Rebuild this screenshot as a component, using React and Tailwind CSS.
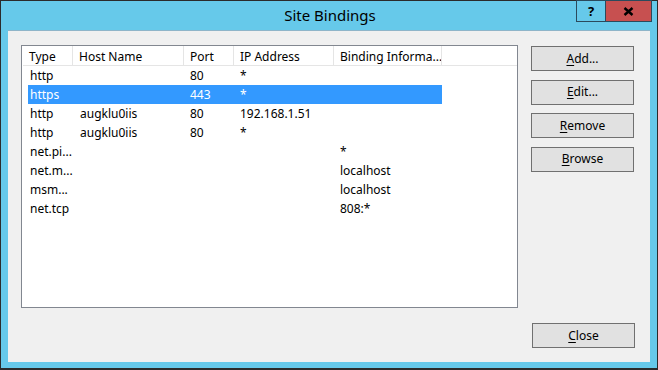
import React from "react";

const font = { fontFamily: '"Segoe UI", "Noto Sans", "Liberation Sans", sans-serif' };

const rows = [
  { type: "http", host: "", port: "80", ip: "*", info: "" },
  { type: "https", host: "", port: "443", ip: "*", info: "", sel: true },
  { type: "http", host: "augklu0iis", port: "80", ip: "192.168.1.51", info: "" },
  { type: "http", host: "augklu0iis", port: "80", ip: "*", info: "" },
  { type: "net.pi...", host: "", port: "", ip: "", info: "*" },
  { type: "net.m...", host: "", port: "", ip: "", info: "localhost" },
  { type: "msm...", host: "", port: "", ip: "", info: "localhost" },
  { type: "net.tcp", host: "", port: "", ip: "", info: "808:*" },
];

function Btn({ u, rest, className = "" }) {
  return (
    <button
      className={
        "w-[103px] h-[25px] bg-[#e1e1e1] border border-[#707070] text-[12px] text-black flex items-center justify-center leading-none " +
        className
      }
    >
      <span className="underline underline-offset-2">{u}</span>
      <span>{rest}</span>
    </button>
  );
}

export default function App() {
  return (
    <div
      className="w-[658px] h-[370px] bg-[#66c9ea] border-t border-l border-r border-b-2 border-[#2b2b2b] flex flex-col"
      style={font}
    >
      <div className="relative h-[29px] flex items-center justify-center shrink-0">
        <span className="text-[15px] text-black leading-none -mt-[1px] pl-[2px]">Site Bindings</span>
        <div className="absolute right-[5px] top-[-1px] flex">
          <div className="w-[30px] h-[22px] border border-[#2b4a5c] flex items-center justify-center text-[13px] font-bold text-black leading-none">
            ?
          </div>
          <div className="w-[46px] h-[22px] bg-[#c75050] border border-l-0 border-[#2b4a5c] flex items-center justify-center">
            <svg width="11" height="9" viewBox="0 0 11 9">
              <path d="M1.5 1 L9.5 8 M9.5 1 L1.5 8" stroke="#000" strokeWidth="2.4" />
            </svg>
          </div>
        </div>
      </div>
      <div className="flex-1 mx-[7px] mb-[6px] bg-[#f0f0f0] border-t border-[#8fb5c9] flex flex-col pl-[13px] pt-[14px]">
        <div className="flex">
          <div className="w-[497px] h-[263px] bg-white border border-[#828790] pl-[1px]">
            <div className="flex h-[20px] border-b border-[#e5e5e5] text-[12px] text-black">
              {[
                ["Type", "w-[50px]"],
                ["Host Name", "w-[111px]"],
                ["Port", "w-[50px]"],
                ["IP Address", "w-[100px]"],
                ["Binding Informa...", "w-[108px]"],
              ].map(([t, w]) => (
                <div key={t} className={w + " h-full flex items-center pt-[2px] pl-[6px] border-r border-[#e5e5e5] whitespace-nowrap overflow-hidden"}>
                  {t}
                </div>
              ))}
            </div>
            {rows.map((r, i) => (
              <div
                key={i}
                className={
                  "ml-[5px] w-[414px] h-[19px] flex items-center pt-[1px] text-[12px] whitespace-nowrap " +
                  (r.sel ? "bg-[#3399ff] text-white" : "text-black")
                }
              >
                <div className="w-[45px] pl-[2px]">{r.type}</div>
                <div className="w-[111px] pl-[7px]">{r.host}</div>
                <div className="w-[50px] pl-[6px]">{r.port}</div>
                <div className="w-[100px] pl-[6px]">{r.ip}</div>
                <div className="w-[108px] pl-[6px]">{r.info}</div>
              </div>
            ))}
          </div>
          <div className="ml-[13px] pt-[1px] flex flex-col gap-[8.5px]">
            <Btn u="A" rest="dd..." />
            <Btn u="E" rest="dit..." />
            <Btn u="R" rest="emove" />
            <Btn u="B" rest="rowse" />
          </div>
        </div>
        <div className="flex justify-end pr-[15px] mt-[15px]">
          <Btn u="C" rest="lose" />
        </div>
      </div>
    </div>
  );
}
